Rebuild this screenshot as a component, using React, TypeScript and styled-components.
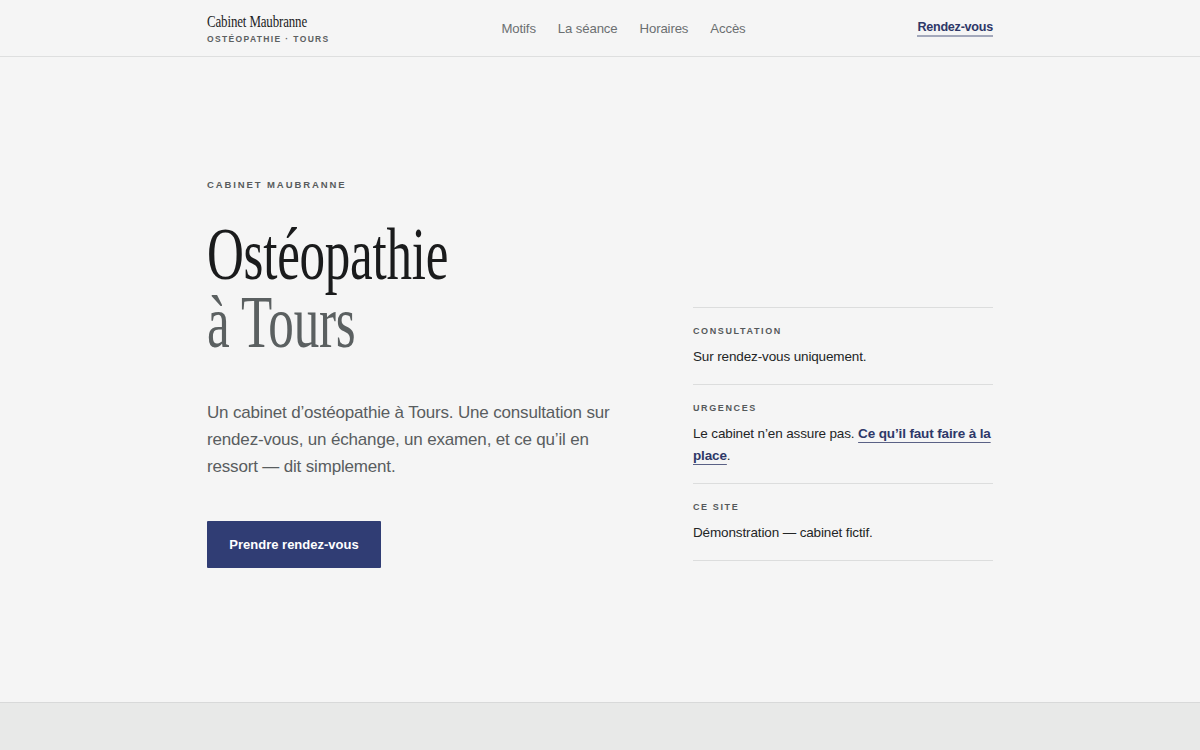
import styled, { createGlobalStyle } from "styled-components";

const GlobalStyle = createGlobalStyle`
  * { box-sizing: border-box; }
  body {
    margin: 0;
    background: #f5f5f5;
    font-family: "Liberation Sans", Arial, sans-serif;
    color: #1d1f20;
  }
  a { text-decoration: none; color: inherit; }
`;

// display serif, narrowed to get the condensed look of the original face
const SERIF = `"Liberation Serif", "Times New Roman", serif`;

const notes = [
  { label: "Consultation", text: "Sur rendez-vous uniquement." },
  {
    label: "Urgences",
    text: "Le cabinet n’en assure pas. ",
    link: "Ce qu’il faut faire à la place",
  },
  { label: "Ce site", text: "Démonstration — cabinet fictif." },
];

const App = () => {
  return (
    <>
      <GlobalStyle />
      <Header>
        <Container className="bar">
          <Brand>
            <span className="name">Cabinet Maubranne</span>
            <span className="sub">Ostéopathie · Tours</span>
          </Brand>
          <Nav>
            <a href="#motifs">Motifs</a>
            <a href="#seance">La séance</a>
            <a href="#horaires">Horaires</a>
            <a href="#acces">Accès</a>
          </Nav>
          <CtaLink href="#rdv">Rendez-vous</CtaLink>
        </Container>
      </Header>

      <Main>
        <Container className="hero">
          <Intro>
            <Eyebrow>Cabinet Maubranne</Eyebrow>
            <Title>
              <span>Ostéopathie</span>
              <span className="place">à Tours</span>
            </Title>
            <Lead>
              Un cabinet d’ostéopathie à Tours. Une consultation sur
              rendez-vous, un échange, un examen, et ce qu’il en ressort — dit
              simplement.
            </Lead>
            <Button href="#rdv">Prendre rendez-vous</Button>
          </Intro>

          {/* infos pratiques */}
          <Notes>
            {notes.map((note) => (
              <Note key={note.label}>
                <h4>{note.label}</h4>
                <p>
                  {note.text}
                  {note.link && (
                    <>
                      <a href="#urgences">{note.link}</a>.
                    </>
                  )}
                </p>
              </Note>
            ))}
          </Notes>
        </Container>
      </Main>

      <Footer />
    </>
  );
};

export default App;

const Container = styled.div`
  width: 786px;
  margin: 0 auto;

  &.bar {
    height: 56px;
    display: flex;
    justify-content: space-between;
    align-items: center;
  }

  &.hero {
    display: grid;
    grid-template-columns: 1fr 300px;
    column-gap: 80px;
    align-items: end;
  }
`;

const Header = styled.header`
  background: #f5f5f5;
  border-bottom: 1px solid #dedfdf;
`;

const Brand = styled.div`
  display: flex;
  flex-direction: column;
  align-items: flex-start;
  padding-top: 2px;

  .name {
    display: inline-block;
    font-family: ${SERIF};
    font-size: 17px;
    line-height: 16px;
    letter-spacing: -0.01em;
    color: #1b1c1d;
    transform: scaleX(0.76);
    transform-origin: left center;
    margin-right: -30px;
  }

  .sub {
    margin-top: 4px;
    font-size: 8.5px;
    font-weight: 700;
    letter-spacing: 0.16em;
    text-transform: uppercase;
    color: #5c6061;
  }
`;

const Nav = styled.nav`
  display: flex;
  gap: 22px;
  font-size: 13.2px;
  letter-spacing: -0.01em;
  color: #6b6f71;
`;

const CtaLink = styled.a`
  font-size: 12.6px;
  font-weight: 700;
  letter-spacing: -0.02em;
  color: #2e3868;
  padding-bottom: 1px;
  border-bottom: 2px solid #a3a8bb;
`;

const Main = styled.main`
  min-height: 645px;
  padding: 122px 0 120px;
`;

const Intro = styled.div`
  display: flex;
  flex-direction: column;
  align-items: flex-start;
`;

const Eyebrow = styled.p`
  margin: 0;
  font-size: 9.5px;
  font-weight: 700;
  letter-spacing: 0.2em;
  text-transform: uppercase;
  color: #585c5d;
`;

const Title = styled.h1`
  margin: 30px 0 0;
  font-family: ${SERIF};
  font-weight: 400;
  font-size: 74px;
  line-height: 68px;
  letter-spacing: -0.005em;
  color: #1a1b1c;

  span {
    display: block;
    transform: scaleX(0.69);
    transform-origin: left center;
  }

  .place {
    color: #5b6061;
  }
`;

const Lead = styled.p`
  margin: 43px 0 0;
  max-width: 408px;
  font-size: 17px;
  line-height: 27px;
  letter-spacing: -0.01em;
  color: #595d5f;
`;

const Button = styled.a`
  margin-top: 41px;
  display: inline-flex;
  align-items: center;
  justify-content: center;
  width: 174px;
  height: 47px;
  background: #303d74;
  color: #ffffff;
  font-size: 13px;
  font-weight: 700;
  border-radius: 1px;
`;

const Notes = styled.div`
  border-top: 1px solid #dcdddd;
  margin-bottom: 7px;
`;

const Note = styled.div`
  padding: 18px 0 16px;
  border-bottom: 1px solid #dcdddd;

  h4 {
    margin: 0;
    font-size: 9px;
    font-weight: 700;
    letter-spacing: 0.18em;
    text-transform: uppercase;
    color: #55595b;
  }

  p {
    margin: 10px 0 0;
    font-size: 13.5px;
    line-height: 22px;
    letter-spacing: -0.01em;
    color: #232526;
  }

  a {
    font-weight: 700;
    color: #2e3868;
    text-decoration: underline;
    text-decoration-color: #5a6185;
    text-decoration-thickness: 1px;
    text-underline-offset: 4px;
  }
`;

const Footer = styled.footer`
  height: 60px;
  background: #e8e9e8;
  border-top: 1px solid #d8d9d9;
`;
